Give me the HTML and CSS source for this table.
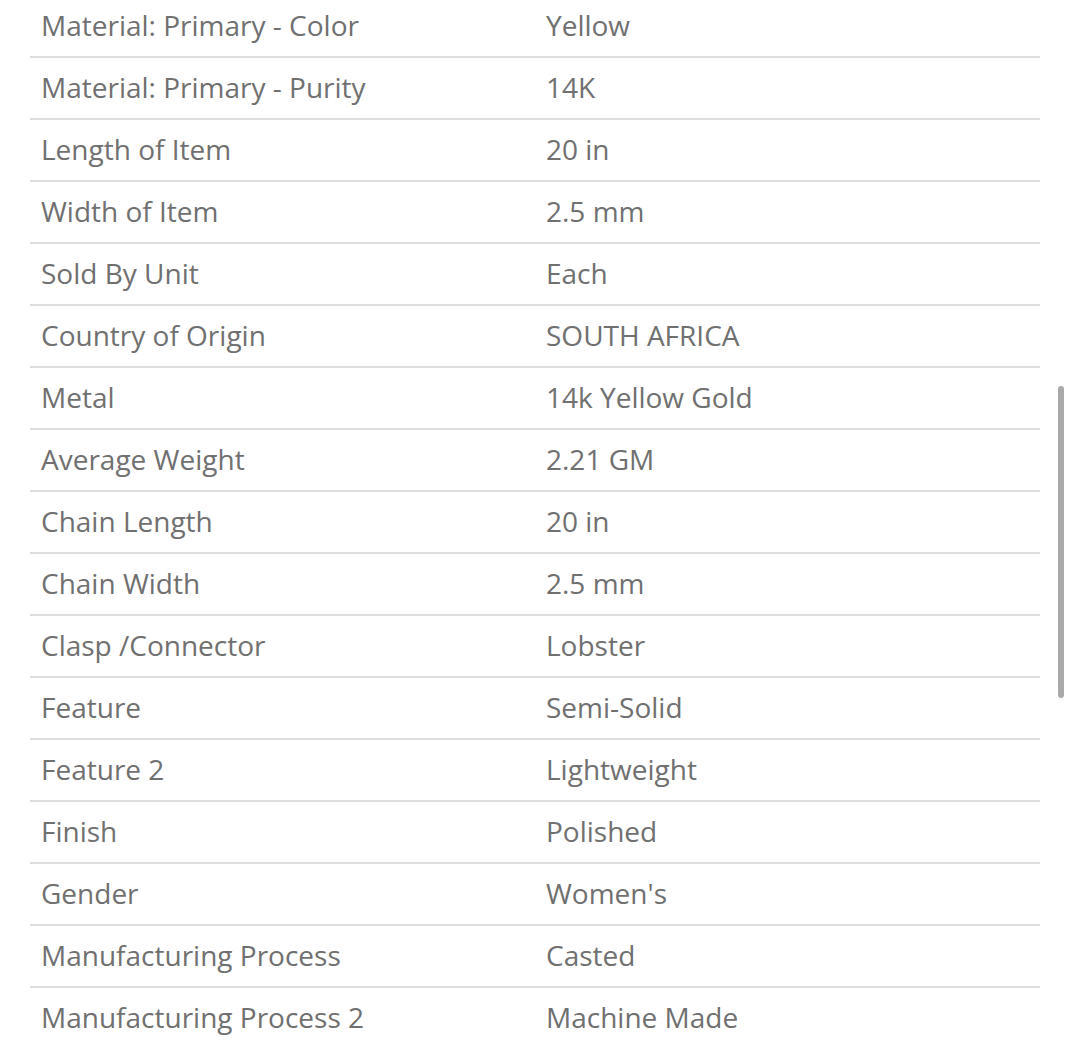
FILE: index.html
```html
<!DOCTYPE html>
<html>
<head>
<meta charset="utf-8">
<link rel="stylesheet" href="styles.css">
</head>
<body>
<div class="wrap">
  <table class="specs">
    <tbody>
      <tr><td>Material: Primary - Color</td><td>Yellow</td></tr>
      <tr><td>Material: Primary - Purity</td><td>14K</td></tr>
      <tr><td>Length of Item</td><td>20 in</td></tr>
      <tr><td>Width of Item</td><td>2.5 mm</td></tr>
      <tr><td>Sold By Unit</td><td>Each</td></tr>
      <tr><td>Country of Origin</td><td>SOUTH AFRICA</td></tr>
      <tr><td>Metal</td><td>14k Yellow Gold</td></tr>
      <tr><td>Average Weight</td><td>2.21 GM</td></tr>
      <tr><td>Chain Length</td><td>20 in</td></tr>
      <tr><td>Chain Width</td><td>2.5 mm</td></tr>
      <tr><td>Clasp /Connector</td><td>Lobster</td></tr>
      <tr><td>Feature</td><td>Semi-Solid</td></tr>
      <tr><td>Feature 2</td><td>Lightweight</td></tr>
      <tr><td>Finish</td><td>Polished</td></tr>
      <tr><td>Gender</td><td>Women's</td></tr>
      <tr><td>Manufacturing Process</td><td>Casted</td></tr>
      <tr><td>Manufacturing Process 2</td><td>Machine Made</td></tr>
    </tbody>
  </table>
</div>
<div class="scrollbar"></div>
</body>
</html>
```
FILE: styles.css
```css
html, body {
  margin: 0;
  padding: 0;
  background: #fff;
  overflow: hidden;
}
body {
  font-family: "Open Sans", "Liberation Sans", sans-serif;
  color: #707070;
}
.wrap {
  padding: 0 30px;
  margin-top: -4px;
}
.specs {
  width: 1010px;
  border-collapse: collapse;
  table-layout: fixed;
}
.specs td {
  width: 50%;
  height: 58px;
  padding: 0 11px 2px;
  font-size: 28px;
  line-height: 36px;
  vertical-align: middle;
  border-bottom: 2px solid #dedede;
  white-space: nowrap;
}
.specs tr:last-child td {
  border-bottom: 0;
}
.scrollbar {
  position: fixed;
  left: 1058px;
  top: 386px;
  width: 6px;
  height: 312px;
  border-radius: 3px;
  background: #a9a9a9;
}
```
